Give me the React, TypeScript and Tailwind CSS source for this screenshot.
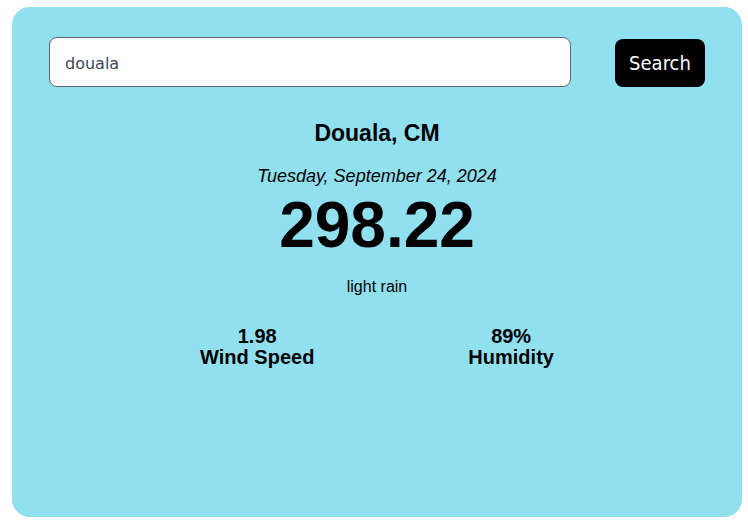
import React from "react";

export default function App() {
  return (
    <div className="w-[748px] h-[527px] bg-white pt-[7px] pl-[12px]" style={{ fontFamily: '"Liberation Sans", Arial, sans-serif' }}>
      <div className="w-[730px] h-[510px] bg-[#90e0ef] rounded-[18px] flex flex-col items-center">
        <div className="w-full flex items-center pl-[37px] pt-[30px]">
          <div className="w-[522px] h-[50px] bg-white border border-[#666] rounded-[8px] flex items-center pl-[15px] pt-[3px] text-[16px] text-[#3a4658]" style={{ fontFamily: '"DejaVu Sans", Verdana, sans-serif' }}>
            douala
          </div>
          <button className="ml-[44px] mt-[2px] w-[90px] h-[48px] bg-black text-white rounded-[8px] text-[20px]" style={{ fontFamily: '"DejaVu Sans Condensed", "DejaVu Sans", Tahoma, sans-serif' }}>
            Search
          </button>
        </div>
        <div className="mt-[32px] text-[23px] font-bold leading-[28px] text-black">Douala, CM</div>
        <div className="mt-[18px] text-[18px] italic leading-[22px] text-black">Tuesday, September 24, 2024</div>
        <div className="mt-[3px] text-[64px] font-bold leading-[70px] text-black">298.22</div>
        <div className="mt-[17px] text-[16px] leading-[20px] text-black">light rain</div>
        <div className="mt-[29px] flex justify-center gap-[154px] text-[20px] font-bold leading-[21px] text-black">
          <div className="flex flex-col items-center">
            <span>1.98</span>
            <span>Wind Speed</span>
          </div>
          <div className="flex flex-col items-center">
            <span>89%</span>
            <span>Humidity</span>
          </div>
        </div>
      </div>
    </div>
  );
}
